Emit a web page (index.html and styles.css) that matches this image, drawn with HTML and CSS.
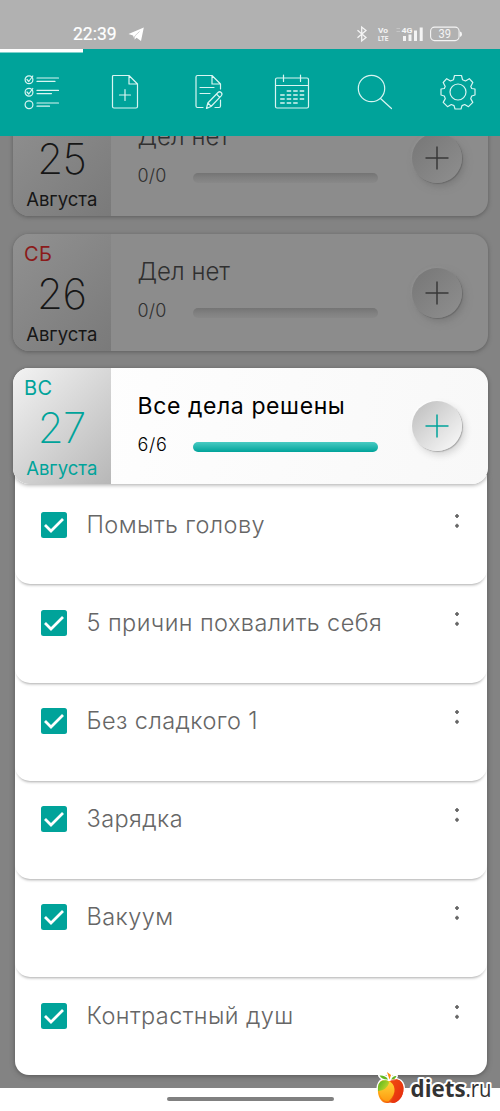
FILE: index.html
```html
<!DOCTYPE html>
<html lang="ru">
<head>
<meta charset="utf-8">
<title>Список дел</title>
<link rel="stylesheet" href="styles.css">
</head>
<body>
<div class="screen">
  <header class="status">
    <span class="clock">22:39</span>
    <svg class="plane" width="16" height="15" viewBox="0 0 16 15"><path d="M.5 7 15.8.4 13 14 8.600 10.700 6.600 12.600 5 8.500Z" fill="#fff"/><path d="m6.300 12 .5-3L11.500 4.500" fill="none" stroke="#b1b1b1" stroke-width=".6"/></svg>
    <svg class="indicators" width="108" height="20" viewBox="0 0 108 20" fill="none" stroke="#f4f4f4">
      <path d="M1.500 6.200 10 13.500 5.700 17V3L10 6.500 1.500 13.800" stroke-width="1.300"/>
      <g class="tiny" fill="#f4f4f4" stroke="none">
        <text x="22" y="8.700" textLength="10" lengthAdjust="spacingAndGlyphs">Vo</text>
        <text x="22" y="16.700" textLength="10.500" lengthAdjust="spacingAndGlyphs">LTE</text>
        <text x="45.500" y="8.700" textLength="11" lengthAdjust="spacingAndGlyphs">4G</text>
        <path d="M47 12h3v5h-3zM52.500 10.500h3V17h-3zM58 6.500h3V17h-3zM63.700 3.500h3V17h-3z"/>
        <path d="M40.500 4h3.500v1h-3.500zM40.500 7h3.500v1h-3.500z" opacity=".3"/>
        <path d="M104 7.500q2 .3 2 2.700t-2 2.700z"/>
      </g>
      <rect x="74.600" y="3.100" width="28.500" height="13.500" rx="4" stroke-width="1.100"/>
      <text class="charge" x="82.500" y="14" textLength="12.500" lengthAdjust="spacingAndGlyphs" fill="#f4f4f4" stroke="none">39</text>
    </svg>
  </header>

  <nav class="toolbar">
    <svg class="tool" viewBox="0 0 36 36">
      <g stroke-width="1.200"><circle cx="5" cy="5.800" r="3.900"/><circle cx="5" cy="18.200" r="3.900"/><circle cx="5" cy="30.700" r="3.900"/><path d="m3 5.500 1.800 2 4-5.500M3 18l1.800 2 4-5.500M13 4h21.500M13 7.400h18M13 16.400h21.500M13 19.600h14.500M13 29h21.500M13 32.200h12.500"/></g>
    </svg>
    <svg class="tool" viewBox="0 0 36 36"><path d="M6.500 1.500h15.500L30.500 10v22.500q0 1.500-1.500 1.500h-22q-1.500 0-1.500-1.500v-30q0-1 1-1ZM22 1.500V10h8.500M18 15.500v11M12.500 21h11"/></svg>
    <svg class="tool" viewBox="0 0 36 36"><path d="M13 33.500H7.500Q6 33.500 6 32V3q0-1.500 1.500-1.500H22L30.500 10v5M22 1.500V10h8.500M10 13.500h14M10 19.500h10M30.500 26v6q0 1.500-1.500 1.500h-4M16.500 34.500l1.300-5.500L28 18.500q1.600-1.500 3.200 0t0 3.300L21 32.500l-4.500 2ZM18 29l3.200 3.300M26.500 20l3.200 3.300"/></svg>
    <svg class="tool" viewBox="0 0 36 36"><rect x="1.500" y="4" width="33" height="30" rx="1.500"/><path d="M1.500 11.500h33M9.500 1v6.500M26.500 1v6.500"/><path d="M12.700 17h17.500M6.200 21h24M6.200 25h24M6.200 29h17.500" stroke-width="1.300" stroke-linecap="butt" stroke-dasharray="4.500 2"/></svg>
    <svg class="tool" viewBox="0 0 36 36"><circle cx="14.500" cy="14.500" r="13.200"/><path d="m23.500 24.500 11 10"/></svg>
    <svg class="tool" viewBox="0 0 36 36"><circle cx="18" cy="18" r="8"/><path d="M14.500 1.500h7l1 4.200 3 1.300 3.800-2.300 3.500 3.800-2 4 .9 2 3.300.5v6l-3.300 1-1 2.600 2.100 3.800-4.300 4.300-3.800-2.200-2.700 1.100-1 3.400h-6l-1-3.400-2.700-1.100-3.800 2.200-4.300-4.300 2.100-3.800-1-2.600-3.300-1v-6l3.300-.5.900-2-2-4 3.500-3.800L10.500 7l3-1.300Z"/></svg>
  </nav>

  <main class="feed">
    <section class="card first">
      <div class="date"><span class="weekday"></span><span class="day">25</span><span class="month">Августа</span></div>
      <div class="info"><span class="title">Дел нет</span><div class="meta"><span class="count">0/0</span><span class="bar"></span></div></div>
      <div class="add"><svg viewBox="0 0 24 24"><path d="M.5 12h23M12 .5v23"/></svg></div>
    </section>
    <section class="card">
      <div class="date"><span class="weekday weekend">СБ</span><span class="day">26</span><span class="month">Августа</span></div>
      <div class="info"><span class="title">Дел нет</span><div class="meta"><span class="count">0/0</span><span class="bar"></span></div></div>
      <div class="add"><svg viewBox="0 0 24 24"><path d="M.5 12h23M12 .5v23"/></svg></div>
    </section>
    <section class="card active">
      <div class="date"><span class="weekday">ВС</span><span class="day">27</span><span class="month">Августа</span></div>
      <div class="info"><span class="title">Все дела решены</span><div class="meta"><span class="count">6/6</span><span class="bar"></span></div></div>
      <div class="add"><svg viewBox="0 0 24 24"><path d="M.5 12h23M12 .5v23"/></svg></div>
    </section>
    <ul class="tasks">
      <li class="task"><svg class="check" viewBox="0 0 26 26"><rect width="26" height="26" rx="2.500"/><path d="m4 13 6 6L22 7"/></svg><span class="name">Помыть голову</span><i class="dots"></i></li>
      <li class="task"><svg class="check" viewBox="0 0 26 26"><rect width="26" height="26" rx="2.500"/><path d="m4 13 6 6L22 7"/></svg><span class="name">5 причин похвалить себя</span><i class="dots"></i></li>
      <li class="task"><svg class="check" viewBox="0 0 26 26"><rect width="26" height="26" rx="2.500"/><path d="m4 13 6 6L22 7"/></svg><span class="name">Без сладкого 1</span><i class="dots"></i></li>
      <li class="task"><svg class="check" viewBox="0 0 26 26"><rect width="26" height="26" rx="2.500"/><path d="m4 13 6 6L22 7"/></svg><span class="name">Зарядка</span><i class="dots"></i></li>
      <li class="task"><svg class="check" viewBox="0 0 26 26"><rect width="26" height="26" rx="2.500"/><path d="m4 13 6 6L22 7"/></svg><span class="name">Вакуум</span><i class="dots"></i></li>
      <li class="task"><svg class="check" viewBox="0 0 26 26"><rect width="26" height="26" rx="2.500"/><path d="m4 13 6 6L22 7"/></svg><span class="name">Контрастный душ</span><i class="dots"></i></li>
    </ul>
  </main>

  <footer class="gesture"><span class="pill"></span></footer>

  <svg class="watermark" width="126" height="41" viewBox="0 0 126 41">
    <defs>
      <linearGradient id="apple" x1="0" y1="0" x2="1" y2=".5"><stop offset="0" stop-color="#ffc91c"/><stop offset=".45" stop-color="#ff8a0c"/><stop offset="1" stop-color="#e0280c"/></linearGradient>
      <linearGradient id="gold" x1="0" y1="0" x2="0" y2="1"><stop offset="0" stop-color="#ffd83a"/><stop offset="1" stop-color="#ff9a10"/></linearGradient>
      <linearGradient id="leaf" x1="0" y1="0" x2="1" y2=".6"><stop offset="0" stop-color="#4fb51f"/><stop offset="1" stop-color="#c5d62a"/></linearGradient>
    </defs>
    <g stroke="#fff" stroke-width="3" stroke-linejoin="round" paint-order="stroke">
      <path d="M16 11c4-3 13-2.500 13.500 7S23 33 19 33q-2.500-1-5 0C8 34 3 27 4 18S11 8.500 16 11Z" fill="url(#apple)"/>
      <path d="M5.500 5.500Q11 5 14.500 9.500 8 10 5.500 5.500ZM17 9.500q2-4 5.500-3.500-1.500 4-5.500 3.500Z" fill="#62b820"/>
      <path d="m13 2 4 3-1.500 4.500Z" fill="#ff8a0c"/>
    </g>
    <path d="M16 11c4-3 13-2.500 13.500 7S23 33 19 33q-1.500-.8-3-.6 6-8 4-14-1-5-4-7.400Z" fill="#e93610" opacity=".75"/>
    <path d="M5 15q2-5 8-4.500 7 2 7.500 8.500t-6 12.500C9 32.500 4 25 5 15Z" fill="url(#gold)"/>
    <path d="M4 21q-1-9 5-10.500 6-1 6 2.500-2 7-11 8Z" fill="url(#leaf)"/>
    <g class="brand" fill="#333" stroke="#fff" stroke-width="4" stroke-linejoin="round" paint-order="stroke"><text class="bold" x="36.500" y="27" textLength="55" lengthAdjust="spacingAndGlyphs">diets</text><text x="91.500" y="27" textLength="26" lengthAdjust="spacingAndGlyphs">.ru</text></g>
  </svg>
</div>
</body>
</html>
```
FILE: styles.css
```css
* { box-sizing: border-box; }
body { margin: 0; font-family: Inter, "Open Sans", sans-serif; }
.screen { position: relative; width: 500px; height: 1111px; overflow: hidden; display: flex; flex-direction: column; background: #fff; }

.status { height: 49px; flex: none; display: flex; align-items: flex-start; background: #b1b1b1; padding: 24px 0 0 73px; color: #fff; }
.clock { width: 55px; font: 400 17.500px/20px Roboto, sans-serif; -webkit-text-stroke: .2px #fff; white-space: nowrap; }
.plane { margin-top: 3px; }
.indicators { margin: 0 0 0 212px; }
.tiny { font: 700 7.500px Roboto, sans-serif; }
.charge { font: 400 12px Roboto, sans-serif; }

.toolbar { height: 86.500px; flex: none; display: grid; grid-template-columns: repeat(6, 1fr); place-items: center; background: linear-gradient(#fff, #fff) 0 0 / 83px 3.500px no-repeat #00a39a; }
.tool { width: 36px; height: 36px; fill: none; stroke: #d9f5f2; stroke-width: 1.200; stroke-linecap: round; stroke-linejoin: round; }

.feed { height: 952.500px; flex: none; overflow: hidden; background: #838383; padding: 0 12px 0 13px; }
.card { position: relative; z-index: 1; display: flex; width: 475px; height: 117px; margin-bottom: 18px; border-radius: 16px; overflow: hidden; background: #8c8c8c; box-shadow: 0 1px 4px #5c5c5c; }
.first { margin-top: -36.500px; }
.date { width: 97.500px; flex: none; padding-top: 5px; display: flex; flex-direction: column; background: linear-gradient(135deg, #919191, #7a7a7a); color: #161616; }
.weekday { height: 30px; padding-left: 11px; font-size: 20px; line-height: 30px; letter-spacing: .3px; }
.weekend { color: #8b1a1a; }
.day { height: 50px; text-align: center; font-size: 42px; font-weight: 200; line-height: 50px; letter-spacing: -.5px; }
.month { height: 30px; text-align: center; font-size: 18.500px; line-height: 30px; white-space: nowrap; }
.info { width: 267.500px; padding: 18px 0 0 27px; color: #303030; }
.title { display: block; height: 40px; font-size: 24px; font-weight: 300; line-height: 40px; white-space: nowrap; }
.meta { display: flex; align-items: center; height: 41px; }
.count { width: 55.500px; font-size: 18px; font-weight: 300; line-height: 36px; padding-bottom: 3px; letter-spacing: .2px; }
.bar { width: 185px; height: 10px; border-radius: 5px; background: linear-gradient(#747474, #808080 50%, #888); }
.add { width: 50px; height: 50px; margin: 34px 0 0 33.500px; border-radius: 50%; display: grid; place-items: center; background: linear-gradient(135deg, #767676, #8f8f8f); box-shadow: 1px 1px 1px #6a6a6a, 3px 4px 7px #7c7c7c, -1px -1px 2px #929292; }
.add svg { width: 24px; height: 24px; fill: none; stroke: #383838; stroke-width: 1.500; }

.active { height: 116px; margin: -.8px 0 0; background: linear-gradient(100deg, #fff, #f8f8f8); box-shadow: 0 1px 4px rgba(0, 0, 0, .35); }
.active .date { padding-top: 4.500px; color: #00a39a; background: linear-gradient(135deg, #f3f3f3, #b7b7b7); }
.active .info { padding-top: 18px; color: #000; }
.active .title { font-size: 23px; font-weight: 400; letter-spacing: .6px; }
.active .count { font-weight: 350; letter-spacing: .7px; }
.active .bar { background: linear-gradient(#49cbc3, #00a39a); }
.active .add { margin-top: 33px; background: linear-gradient(135deg, #bcbcbc, #fcfcfc); box-shadow: 1px 1px 1px #aaa, 3px 4px 7px #d5d5d5, -1px -1px 2px #fff; }
.active .add svg { stroke: #00a39a; }

.tasks { list-style: none; width: 472px; height: 600px; margin: -9px 0 0 1.500px; padding: 9px 0 0; background: #fff; border-radius: 0 0 14px 14px; box-shadow: 0 1px 5px #555; }
.task { display: flex; align-items: flex-start; height: 98.200px; padding: 25.500px 28px 0 26px; border-radius: 0 0 15px 15px; box-shadow: 0 3px 3px -2px #aaa; }
.task:first-child { height: 100.200px; padding-top: 27.500px; }
.task:last-child { box-shadow: none; }
.check { width: 26px; height: 26px; flex: none; fill: #00a39a; }
.check path { fill: none; stroke: #fff; stroke-width: 2.800; }
.name { margin-left: 20px; flex: 1; font-size: 23.500px; font-weight: 300; line-height: 26px; letter-spacing: .43px; color: #666; white-space: nowrap; }
.dots { width: 4px; height: 14px; margin-top: 2px; background: radial-gradient(circle at 2px 2px, #666 1.500px, transparent 2px) 0 0 / 4px 9.800px; }

.gesture { height: 23px; flex: none; display: flex; justify-content: center; padding-top: 9px; background: #fff; }
.pill { width: 167px; height: 4px; border-radius: 2px; background: #808080; }

.watermark { position: absolute; left: 374px; top: 1070px; }
.brand { font: 400 23px "Open Sans", sans-serif; }
.brand .bold { font-weight: 700; }
```
